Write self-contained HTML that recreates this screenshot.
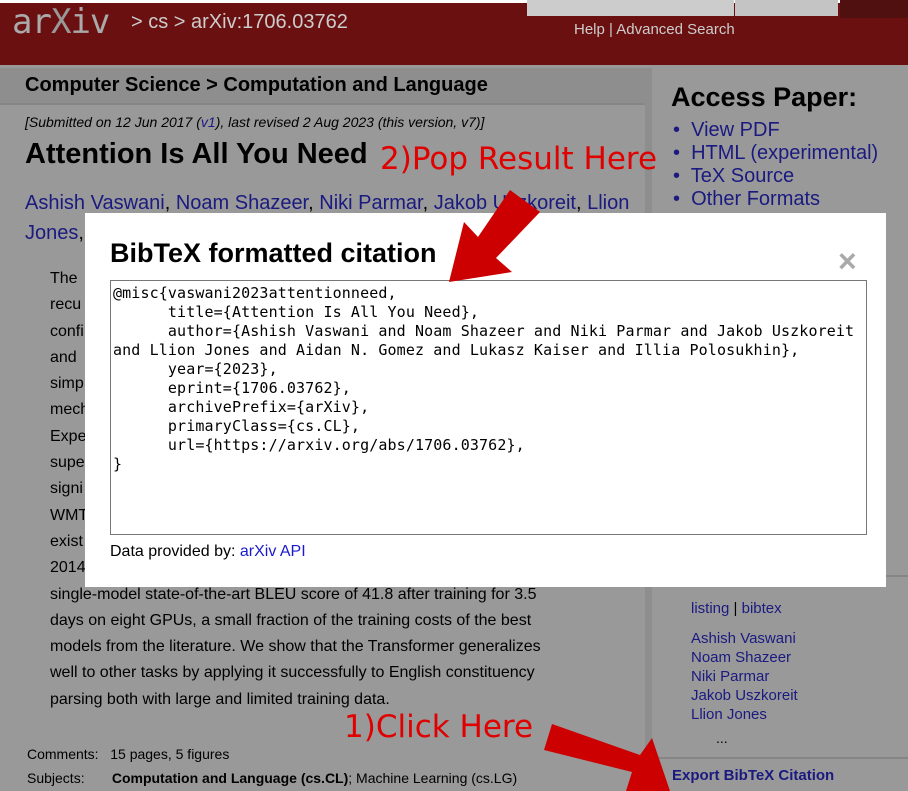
<!DOCTYPE html>
<html><head><meta charset="utf-8"><style>
*{margin:0;padding:0;box-sizing:border-box}
body{width:908px;height:791px;overflow:hidden;background:#999;font-family:"Liberation Sans",sans-serif;position:relative;color:#000}
.a{position:absolute}
.lnk{color:#1a1a80}
#hdr{left:0;top:3px;width:908px;height:62px;background:#6a1010}
.mono{font-family:"DejaVu Sans Mono",monospace}
</style></head><body>
<div class="a" style="left:0;top:0;width:908px;height:3px;background:#fff"></div>
<div id="hdr" class="a"></div>
<div class="a" style="left:12px;top:2px;font-size:34px;color:#aaa;font-family:'DejaVu Sans Mono',monospace;letter-spacing:-1px">ar<span style="color:#999">X</span>iv</div>
<div class="a" style="left:131px;top:11px;font-size:20px;color:#ccc">&gt; cs &gt; arXiv:1706.03762</div>
<div class="a" style="left:527px;top:0;width:207px;height:16px;background:#ccc"></div>
<div class="a" style="left:735px;top:0;width:103px;height:16px;background:#c4c4c4"></div>
<div class="a" style="left:840px;top:0;width:68px;height:18px;background:#501010"></div>
<div class="a" style="left:574px;top:21px;font-size:15px;color:#ccc">Help | Advanced Search</div>
<div class="a" style="left:0;top:65px;width:908px;height:3px;background:#999"></div>
<div class="a" style="left:0;top:68px;width:645px;height:37px;background:#8e8e8e;border-bottom:2px solid #858585"></div>
<div class="a" style="left:645px;top:68px;width:7px;height:723px;background:#8e8e8e"></div>
<div class="a" style="left:25px;top:74px;font-size:20px;font-weight:bold">Computer Science &gt; Computation and Language</div>
<div class="a" style="left:25px;top:114px;font-size:14px;font-style:italic">[Submitted on 12 Jun 2017 (<span class="lnk">v1</span>), last revised 2 Aug 2023 (this version, v7)]</div>
<div class="a" style="left:25px;top:138px;font-size:29px;font-weight:bold">Attention Is All You Need</div>
<div class="a lnk" style="left:25px;top:188px;font-size:20px;line-height:30px;width:615px">Ashish Vaswani<span style="color:#000">,</span> Noam Shazeer<span style="color:#000">,</span> Niki Parmar<span style="color:#000">,</span> Jakob Uszkoreit<span style="color:#000">,</span> Llion Jones<span style="color:#000">,</span></div>
<div class="a" style="left:50px;top:266px;font-size:16px;line-height:26.3px;width:518px">The<br>recu<br>confi<br>and<br>simp<br>mech<br>Expe<br>supe<br>signi<br>WMT<br>exist<br>2014<br>single-model state-of-the-art BLEU score of 41.8 after training for 3.5 days on eight GPUs, a small fraction of the training costs of the best models from the literature. We show that the Transformer generalizes well to other tasks by applying it successfully to English constituency parsing both with large and limited training data.</div>
<div class="a" style="left:27px;top:746px;font-size:14px">Comments:&nbsp;&nbsp; 15 pages, 5 figures</div>
<div class="a" style="left:27px;top:770px;font-size:14px">Subjects:&nbsp;&nbsp;&nbsp;&nbsp;&nbsp;&nbsp; <b>Computation and Language (cs.CL)</b>; Machine Learning (cs.LG)</div>
<div class="a" style="left:671px;top:82px;font-size:27px;font-weight:bold">Access Paper:</div>
<div class="a lnk" style="left:673px;top:119px;font-size:20px;line-height:23px">
<div>•&nbsp; View PDF</div><div>•&nbsp; HTML (experimental)</div><div>•&nbsp; TeX Source</div><div>•&nbsp; Other Formats</div></div>
<div class="a" style="left:652px;top:575px;width:256px;height:2px;background:#858585"></div>
<div class="a lnk" style="left:691px;top:600px;font-size:15px">listing <span style="color:#000">|</span> bibtex</div>
<div class="a lnk" style="left:691px;top:629px;font-size:15px;line-height:19px">Ashish Vaswani<br>Noam Shazeer<br>Niki Parmar<br>Jakob Uszkoreit<br>Llion Jones</div>
<div class="a" style="left:716px;top:730px;font-size:14px">...</div>
<div class="a" style="left:652px;top:757px;width:256px;height:2px;background:#858585"></div>
<div class="a" style="left:672px;top:767px;font-size:15px;font-weight:bold;color:#1a1a80">Export BibTeX Citation</div>
<!-- modal -->
<div class="a" style="left:85px;top:213px;width:801px;height:374px;background:#fff"></div>
<div class="a" style="left:110px;top:238px;font-size:27px;font-weight:bold">BibTeX formatted citation</div>
<div class="a" style="left:838px;top:243px;font-size:32px;font-weight:bold;color:#aaa">×</div>
<div class="a mono" style="left:110px;top:280px;width:757px;height:255px;border:1px solid #777;padding:3px 2px;font-size:15px;letter-spacing:0.12px;line-height:19px;white-space:pre-wrap;color:#000">@misc{vaswani2023attentionneed,
      title={Attention Is All You Need}, 
      author={Ashish Vaswani and Noam Shazeer and Niki Parmar and Jakob Uszkoreit and Llion Jones and Aidan N. Gomez and Lukasz Kaiser and Illia Polosukhin},
      year={2023},
      eprint={1706.03762},
      archivePrefix={arXiv},
      primaryClass={cs.CL},
      url={https://arxiv.org/abs/1706.03762}, 
}</div>
<div class="a" style="left:110px;top:543px;font-size:16px">Data provided by: <span style="color:#1a1acc">arXiv API</span></div>
<!-- annotations -->
<div class="a" style="left:380px;top:141px;font-size:31px;color:#e00000;font-family:'DejaVu Sans',sans-serif">2)Pop Result Here</div>
<div class="a" style="left:344px;top:709px;font-size:31px;color:#e00000;font-family:'DejaVu Sans',sans-serif">1)Click Here</div>
<svg class="a" style="left:0;top:0" width="908" height="791">
<polygon fill="#cc0000" points="510,190 540,212 496,258 512,272 449,282 464,222 478,237"/>
<polygon fill="#cc0000" points="552,724 544,750 632,772 626,791 670,791 652,738 640,755"/>
</svg>
</body></html>
